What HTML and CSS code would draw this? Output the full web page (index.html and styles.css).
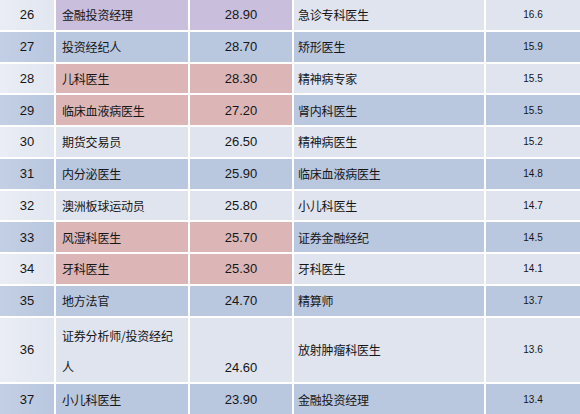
FILE: index.html
```html
<!DOCTYPE html>
<html lang="zh-CN">
<head>
<meta charset="utf-8">
<title>职业排名</title>
<link rel="stylesheet" href="styles.css">
</head>
<body>
<div class="table">
  <div class="row light"><div class="c num">26</div><div class="c name purple">金融投资经理</div><div class="c val purple">28.90</div><div class="c name2">急诊专科医生</div><div class="c val2">16.6</div></div>
  <div class="row dark"><div class="c num">27</div><div class="c name">投资经纪人</div><div class="c val">28.70</div><div class="c name2">矫形医生</div><div class="c val2">15.9</div></div>
  <div class="row light"><div class="c num">28</div><div class="c name pink">儿科医生</div><div class="c val pink">28.30</div><div class="c name2">精神病专家</div><div class="c val2">15.5</div></div>
  <div class="row dark"><div class="c num">29</div><div class="c name pink">临床血液病医生</div><div class="c val pink">27.20</div><div class="c name2">肾内科医生</div><div class="c val2">15.5</div></div>
  <div class="row light"><div class="c num">30</div><div class="c name">期货交易员</div><div class="c val">26.50</div><div class="c name2">精神病医生</div><div class="c val2">15.2</div></div>
  <div class="row dark"><div class="c num">31</div><div class="c name">内分泌医生</div><div class="c val">25.90</div><div class="c name2">临床血液病医生</div><div class="c val2">14.8</div></div>
  <div class="row light"><div class="c num">32</div><div class="c name">澳洲板球运动员</div><div class="c val">25.80</div><div class="c name2">小儿科医生</div><div class="c val2">14.7</div></div>
  <div class="row dark"><div class="c num">33</div><div class="c name pink">风湿科医生</div><div class="c val pink">25.70</div><div class="c name2">证券金融经纪</div><div class="c val2">14.5</div></div>
  <div class="row light"><div class="c num">34</div><div class="c name pink">牙科医生</div><div class="c val pink">25.30</div><div class="c name2">牙科医生</div><div class="c val2">14.1</div></div>
  <div class="row dark"><div class="c num">35</div><div class="c name">地方法官</div><div class="c val">24.70</div><div class="c name2">精算师</div><div class="c val2">13.7</div></div>
  <div class="row light tall"><div class="c num">36</div><div class="c name wrap">证券分析师/投资经纪人</div><div class="c val bottom">24.60</div><div class="c name2">放射肿瘤科医生</div><div class="c val2">13.6</div></div>
  <div class="row dark"><div class="c num">37</div><div class="c name">小儿科医生</div><div class="c val">23.90</div><div class="c name2">金融投资经理</div><div class="c val2">13.4</div></div>
</div>
</body>
</html>
```
FILE: styles.css
```css
html, body {
  margin: 0;
  padding: 0;
  background: #ffffff;
}
body {
  width: 580px;
  height: 414px;
  overflow: hidden;
}
.table {
  display: grid;
  grid-template-columns: 54px 132px 102px 190px 94px;
  grid-template-rows: repeat(10, 29.75px) 64.5px 31px;
  column-gap: 2px;
  row-gap: 2px;
  background: #ffffff;
  color: #161616;
}
.row {
  display: contents;
}
.c {
  display: flex;
  align-items: center;
  min-width: 0;
}
.light .c { background: #dfe4ef; }
.dark .c { background: #b9c7df; }
.light .num { background: linear-gradient(90deg, #eaedf5 0%, #e1e6f0 100%); }
.dark .num { background: linear-gradient(90deg, #c3cfe4 0%, #b9c7df 100%); }
.c.purple { background: #c9bedb; }
.c.pink { background: #dcb6b6; }
.num, .val {
  justify-content: center;
  font-family: "Liberation Sans", Arial, sans-serif;
  font-size: 13px;
}
.name, .name2 {
  font-family: "Noto Sans CJK SC", "Noto Sans", sans-serif;
  font-size: 12px;
  letter-spacing: -0.2px;
}
.name { padding-left: 6px; }
.name2 { padding-left: 4px; }
.val2 {
  justify-content: center;
  font-family: "Liberation Sans", Arial, sans-serif;
  font-size: 10px;
}
.wrap {
  line-height: 31px;
  padding-top: 3px;
  padding-right: 4px;
}
.bottom {
  align-items: flex-end;
  padding-bottom: 7px;
}
```
